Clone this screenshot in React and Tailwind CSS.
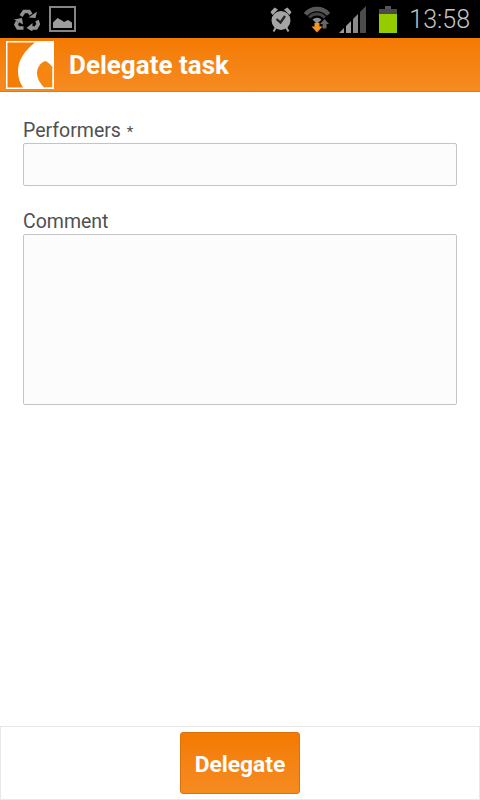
function StatusBar() {
  return (
    <div className="h-[38px] bg-black flex items-center pl-[14px] pr-[10px]">
      <svg className="mt-[2px]" width="26" height="22" viewBox="0 0 26 22" fill="none" stroke="#929292" strokeWidth="3.6">
        <path d="M7 7 L10 2.5 L15 2.5 L17 5.5" />
        <path d="M14.5 8.5 L21.5 9 L23 2.5 Z" fill="#929292" stroke="none" />
        <path d="M23 11.5 L24.3 15 L22 19 L18 19" />
        <path d="M18.5 14 L12.5 19 L18.5 22.5 Z" fill="#929292" stroke="none" />
        <path d="M9.5 19 L4 19 L2 15.5 L3.5 12.5" />
        <path d="M0 10.5 L8 9 L9 15.5 Z" fill="#929292" stroke="none" />
      </svg>
      <svg className="ml-[9px]" width="27" height="26" viewBox="0 0 27 26">
        <rect x="1" y="1" width="25" height="24" fill="none" stroke="#858585" strokeWidth="2" />
        <path d="M4 22 V16.5 L8.5 12 L13 14.5 L15 16 L19 14 L23 16.5 V22 Z" fill="#9c9c9c" />
      </svg>
      <div className="ml-auto flex items-center">
        <svg className="mt-[1px]" width="22" height="25" viewBox="0 0 22 25">
          <circle cx="11" cy="13.5" r="9.5" fill="#a4a4a4" />
          <path d="M6.5 12 L10.5 15.5 L15 9" fill="none" stroke="#222222" strokeWidth="2.2" />
          <path d="M0.5 5 L4.5 0.5 L8 2.5 L2.5 8 Z M21.5 5 L17.5 0.5 L14 2.5 L19.5 8 Z" fill="#a4a4a4" />
          <path d="M5.5 21 L3.5 24.5 M16.5 21 L18.5 24.5" stroke="#a4a4a4" strokeWidth="2" />
        </svg>
        <svg className="ml-[12px]" width="26" height="28" viewBox="0 0 26 28" fill="none">
          <path d="M1.5 9.4 A15 15 0 0 1 24.5 9.4" stroke="#585858" strokeWidth="4.5" />
          <path d="M5.3 12.6 A10 10 0 0 1 20.7 12.6" stroke="#444444" strokeWidth="3" />
          <path d="M8.5 14.5 A6.5 6.5 0 0 1 17.5 14.5 L13 19 Z" fill="#8e8e8e" />
          <path d="M10.5 18 h5 v3.5 h3 l-5.5 6 l-5.5 -6 h3 z" fill="#f7941d" />
          <path d="M20.5 14 l4.5 5 h-2.5 v4.5 h-4 v-4.5 h-2.5 z" fill="#666666" />
        </svg>
        <svg className="ml-[9px]" width="28" height="27" viewBox="0 0 28 27">
          <path d="M0 27 L5 22 V27 Z" fill="#9a9a9a" />
          <path d="M7 20 L12 15 V27 H7 Z" fill="#9a9a9a" />
          <path d="M14 13 L19 8 V27 H14 Z" fill="#8a8a8a" />
          <path d="M21 6 L27 0 V27 H21 Z" fill="#4c4c4c" />
        </svg>
        <div className="ml-[12px] mt-[1px] flex flex-col items-center w-[18px]">
          <div className="w-[6px] h-[3px] bg-[#555]" />
          <div className="w-[18px] h-[5px] bg-[#4a4a4a]" />
          <div className="w-[18px] h-[19px] bg-[#94cc00]" />
        </div>
        <span className="ml-[12px] text-[25px] leading-none text-[#c4c4c4] font-['Roboto',sans-serif] font-light">13:58</span>
      </div>
    </div>
  );
}

function Logo() {
  return (
    <svg width="48" height="48" viewBox="0 0 48 48">
      <rect width="48" height="48" fill="#fff" />
      <path d="M1.5 1.5 H29 C 18 10 12 20 12 30 C 12 37 14 42 17 46.5 H1.5 Z" fill="#f47d06" />
      <path d="M39 20 C 42 21 45 24 47 27 V47 H39 C 34 43 31 37 31 32 C 31 27 34 22 39 20 Z" fill="#f6860f" />
      <path d="M47 27 V47 H39" fill="none" stroke="#fff" strokeWidth="1.5" />
    </svg>
  );
}

export default function App() {
  return (
    <div className="h-[800px] flex flex-col bg-white font-['Roboto',sans-serif]">
      <StatusBar />

      <div className="h-[54px] flex items-center pl-[6px] bg-gradient-to-b from-[#f47a00] to-[#f68b20] border-b border-[#e8780c]">
        <Logo />
        <h1 className="ml-[15px] pt-[2px] text-[26px] font-bold text-white">Delegate task</h1>
      </div>

      <div className="flex-1 px-[23px] pt-[27px]">
        <label className="block h-[24px] text-[19.5px] leading-[24px] text-[#505050]">
          Performers <span className="text-[15px] leading-none ml-[1px]">*</span>
        </label>
        <div className="h-[43px] bg-[#fcfcfc] border border-[#c4c4c4] rounded-[2px]" />

        <label className="block mt-[23px] h-[25px] text-[19.5px] leading-[25px] text-[#505050]">Comment</label>
        <div className="h-[171px] bg-[#fcfcfc] border border-[#c4c4c4] rounded-[2px]" />
      </div>

      <div className="h-[74px] flex items-center justify-center border border-[#e8e8e8]">
        <button className="w-[120px] h-[62px] pt-[4px] rounded-[3px] border border-[#d8720c] bg-gradient-to-b from-[#f47a00] to-[#f68b20] text-[22.8px] font-bold text-white">
          Delegate
        </button>
      </div>
    </div>
  );
}
